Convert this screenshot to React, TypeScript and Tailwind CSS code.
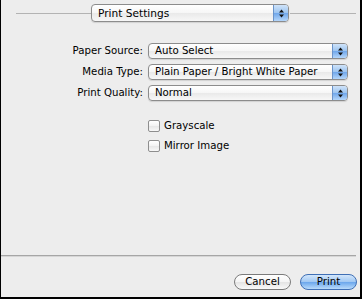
import * as React from "react";

// Aqua-style popup button (label on the left, blue stepper on the right)
function Popup({ value, className = "" }: { value: string; className?: string }) {
  return (
    <div
      className={`flex items-stretch rounded-[4px] border border-[#8c8c8c] bg-[linear-gradient(#ffffff,#f6f6f6_50%,#e9e9e9_51%,#f7f7f7)] shadow-[0_1px_1px_rgba(0,0,0,0.12)] overflow-hidden ${className}`}
    >
      <div className="flex-1 flex items-center pl-[6px] text-black leading-none whitespace-nowrap">{value}</div>
      <div className="w-[15px] flex items-center justify-center border-l border-[#6a93c9] bg-[linear-gradient(#cfe3f9,#9cc4f0_50%,#6fa6ea_51%,#b4d6fa)]">
        <svg width="7" height="9" viewBox="0 0 7 9">
          <path d="M3.5 0.5 L6 3.5 L1 3.5 Z" fill="#111" />
          <path d="M1 5.5 L6 5.5 L3.5 8.5 Z" fill="#111" />
        </svg>
      </div>
    </div>
  );
}

function Row({ label, value }: { label: string; value: string }) {
  return (
    <div className="flex items-center h-[16px]">
      <div className="w-[143px] pr-[1px] text-right text-black">{label}</div>
      <Popup value={value} className="ml-[4px] w-[200px] h-[16px]" />
    </div>
  );
}

function Check({ label }: { label: string }) {
  return (
    <div className="flex items-center h-[12px] pl-[147px]">
      <div className="w-[12px] h-[12px] rounded-[2px] border border-[#8e8e8e] bg-[linear-gradient(#ffffff,#f2f2f2_50%,#e6e6e6_51%,#f8f8f8)]" />
      <span className="ml-[4px] text-black">{label}</span>
    </div>
  );
}

export default function App() {
  return (
    <div
      className="w-[362px] h-[299px] flex flex-col bg-[#ededed] border-l border-r-2 border-b-2 border-black text-[10.2px] overflow-hidden"
      style={{ fontFamily: '"DejaVu Sans", "Liberation Sans", sans-serif' }}
    >
      {/* header popup with rule on both sides */}
      <div className="flex items-center mt-[4px] h-[18px]">
        <div className="ml-[15px] w-[75px] h-px bg-[#b3b3b3]" />
        <Popup value="Print Settings" className="w-[198px] h-[18px] text-[10.6px]" />
        <div className="ml-[1px] mr-[4px] flex-1 h-px bg-[#b3b3b3]" />
      </div>

      {/* settings */}
      <div className="mt-[21px] flex flex-col gap-[5px]">
        <Row label="Paper Source:" value="Auto Select" />
        <Row label="Media Type:" value="Plain Paper / Bright White Paper" />
        <Row label="Print Quality:" value="Normal" />
      </div>

      <div className="mt-[19px] flex flex-col gap-[8px]">
        <Check label="Grayscale" />
        <Check label="Mirror Image" />
      </div>

      {/* footer */}
      <div className="mt-auto">
        <div className="mr-[4px] h-px bg-[#a6a6a6]" />
        <div className="mr-[4px] h-px bg-[#d6d6d6]" />
        <div className="flex justify-end gap-[9px] mt-[17px] mb-[7px] mr-[3px]">
          <button className="w-[57px] h-[16px] rounded-full border border-[#7b7b7b] bg-[linear-gradient(#ffffff,#f4f4f4_50%,#e4e4e4_51%,#f9f9f9)] text-black leading-none">
            Cancel
          </button>
          <button className="w-[57px] h-[16px] rounded-full border border-[#3f6fb5] bg-[linear-gradient(#d3e6fb,#9fc7f2_50%,#6aa6ec_51%,#b9dbfb)] text-black leading-none">
            Print
          </button>
        </div>
      </div>
    </div>
  );
}
